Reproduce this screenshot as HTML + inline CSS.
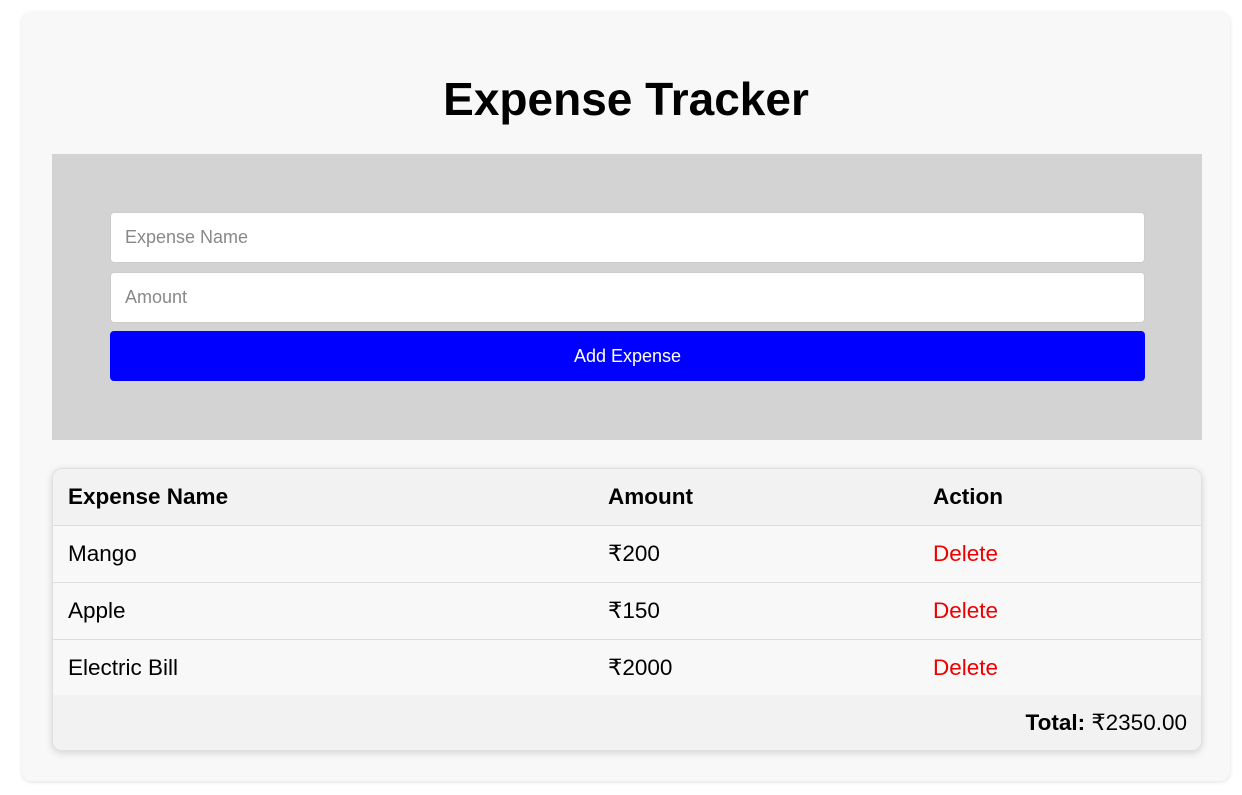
<!DOCTYPE html>
<html><head><style>
*{box-sizing:border-box;margin:0;padding:0}
body{width:1242px;height:795px;background:#fff;font-family:"Liberation Sans",Arial,sans-serif;position:relative;overflow:hidden}
.card{position:absolute;left:22px;top:12px;width:1208px;height:769px;background:#f8f8f8;border-radius:10px;box-shadow:0 1px 4px rgba(0,0,0,.12)}
h1{position:absolute;left:0;right:0;top:60px;text-align:center;font-size:46px;font-weight:bold;line-height:54px}
.form{position:absolute;left:30px;top:142px;width:1150px;height:286px;background:#d3d3d3}
.inp{position:absolute;left:58px;width:1035px;height:51px;background:#fff;border:1px solid #ccc;border-radius:4px;font-size:18px;color:#888;padding-left:14px;line-height:49px}
.btn{position:absolute;left:58px;top:177px;width:1035px;height:50px;background:#00f;border-radius:4px;color:#fff;font-size:18px;text-align:center;line-height:50px}
.tbl{position:absolute;left:30px;top:456px;width:1150px;height:283px;border-radius:10px;overflow:hidden;box-shadow:0 2px 8px rgba(0,0,0,.15);background:#f8f8f8;border:1px solid #e0e0e0}
.row{position:absolute;left:0;width:100%;height:57px;font-size:22.5px;line-height:56px;border-bottom:1px solid #ddd}
.row span{position:absolute}
.c1{left:15px}.c2{left:555px}.c3{left:880px}
.del{color:#e00}
</style></head><body>
<div class="card">
<h1>Expense Tracker</h1>
<div class="form">
<div class="inp" style="top:58px">Expense Name</div>
<div class="inp" style="top:118px">Amount</div>
<div class="btn">Add Expense</div>
</div>
<div class="tbl">
<div class="row" style="top:0;background:#f2f2f2;font-weight:bold"><span class="c1">Expense Name</span><span class="c2">Amount</span><span class="c3">Action</span></div>
<div class="row" style="top:57px"><span class="c1">Mango</span><span class="c2">₹200</span><span class="c3 del">Delete</span></div>
<div class="row" style="top:114px"><span class="c1">Apple</span><span class="c2">₹150</span><span class="c3 del">Delete</span></div>
<div class="row" style="top:171px;border-bottom:none"><span class="c1">Electric Bill</span><span class="c2">₹2000</span><span class="c3 del">Delete</span></div>
<div class="row" style="top:226px;background:#f2f2f2;border:none;text-align:right;padding-right:14px"><b>Total:</b> ₹2350.00</div>
</div>
</div>
</body></html>
